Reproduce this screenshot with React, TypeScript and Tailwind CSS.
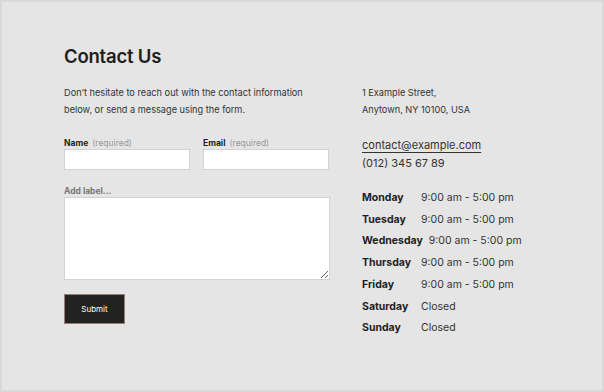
import React from "react";

const hours = [
  { day: "Monday", time: "9:00 am - 5:00 pm" },
  { day: "Tuesday", time: "9:00 am - 5:00 pm" },
  { day: "Wednesday", time: "9:00 am - 5:00 pm" },
  { day: "Thursday", time: "9:00 am - 5:00 pm" },
  { day: "Friday", time: "9:00 am - 5:00 pm" },
  { day: "Saturday", time: "Closed" },
  { day: "Sunday", time: "Closed" },
];

export default function App() {
  return (
    <div
      className="w-[604px] h-[392px] border-2 border-[#d9d9d9] bg-[#e5e5e5] pl-[62px] pt-[42px] text-[#1e1e1e]"
      style={{ fontFamily: "Inter, 'Noto Sans', sans-serif" }}
    >
      <h1 className="text-[18.5px] leading-[24px] font-semibold tracking-[-0.2px]">Contact Us</h1>

      <div className="flex mt-[16px]">
        <div className="w-[266px]">
          <p className="text-[9.2px] leading-[17px] text-[#333]">
            Don’t hesitate to reach out with the contact information
            <br />
            below, or send a message using the form.
          </p>

          <div className="flex gap-[13px] mt-[19px]">
            <label className="flex flex-col w-[126px]">
              <span className="text-[8.5px] leading-[12px] font-bold">
                Name <span className="font-normal text-[#999] ml-[2px]">(required)</span>
              </span>
              <input type="text" className="h-[21px] bg-white border border-[#d2d2d2]" />
            </label>
            <label className="flex flex-col w-[126px]">
              <span className="text-[8.5px] leading-[12px] font-bold">
                Email <span className="font-normal text-[#999] ml-[2px]">(required)</span>
              </span>
              <input type="email" className="h-[21px] bg-white border border-[#d2d2d2]" />
            </label>
          </div>

          <label className="flex flex-col mt-[15px]">
            <span className="text-[8.5px] leading-[12px] font-bold text-[#777]">Add label...</span>
            <textarea className="h-[83px] w-[266px] bg-white border border-[#d2d2d2] resize" />
          </label>

          <button
            type="submit"
            className="mt-[14px] w-[61px] h-[30px] bg-[#222] border border-[#9b7b78] text-white text-[8px]"
          >
            Submit
          </button>
        </div>

        <div className="ml-[32px] text-[#333]">
          <p className="text-[9.2px] leading-[17px]">
            1 Example Street,
            <br />
            Anytown, NY 10100, USA
          </p>

          <div className="mt-[18px] text-[11px] leading-[18px]">
            <a href="#" className="underline underline-offset-[3px] decoration-[1px]">contact@example.com</a>
            <div>(012) 345 67 89</div>
          </div>

          <div className="mt-[15px] text-[10.5px] leading-[21.7px]">
            {hours.map((h) => (
              <div key={h.day} className="flex">
                <span className="inline-block min-w-[53px] font-bold text-[#1e1e1e]">{h.day}</span>
                <span className="ml-[6px]">{h.time}</span>
              </div>
            ))}
          </div>
        </div>
      </div>
    </div>
  );
}
